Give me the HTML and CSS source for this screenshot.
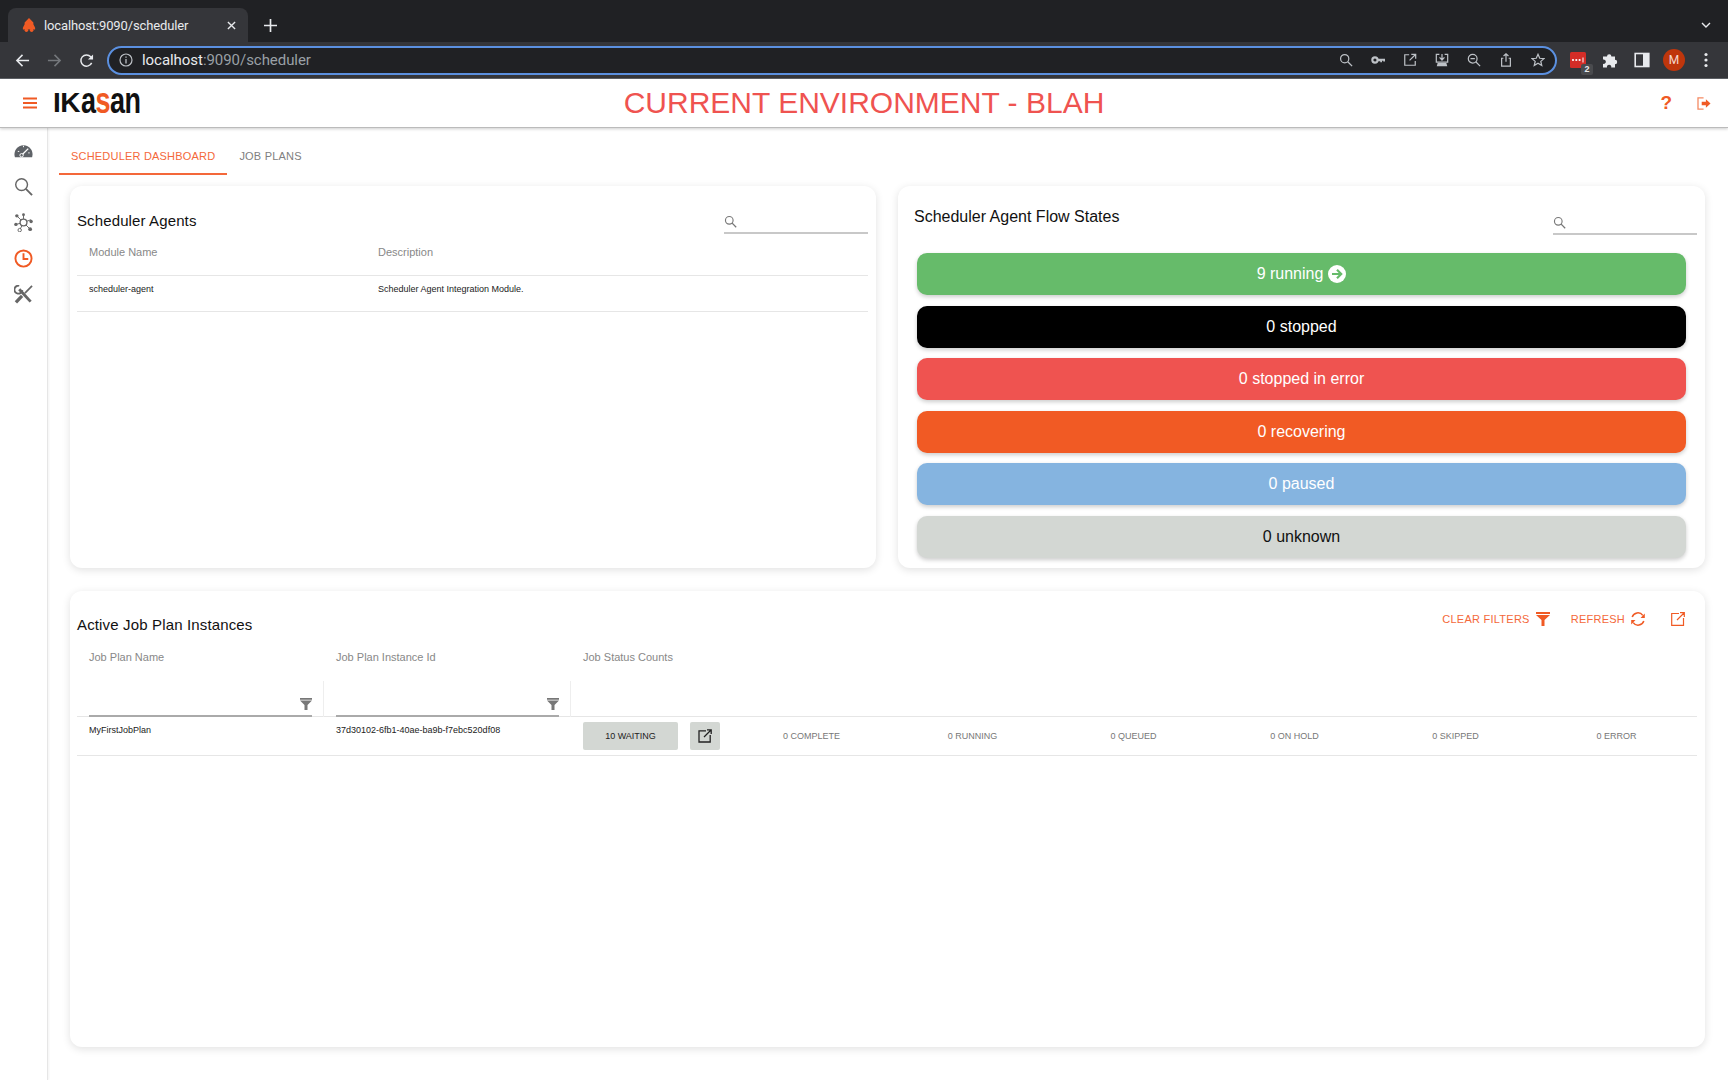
FILE: index.html
```html
<!DOCTYPE html>
<html>
<head>
    <title>localhost:9090/scheduler</title>
    <link rel="stylesheet" href="styles.css">
</head>
<body>
    <div class="tab-strip">
        <div class="browser-tab">
            <svg class="favicon" viewBox="0 0 16 16"><path d="M8 0 L13 5 V7 L15 11 V13 H1 V11 L3 7 V5 Z" fill="#f05a24"/><circle cx="5" cy="14" r="2" fill="#f05a24"/><circle cx="11" cy="14" r="2" fill="#f05a24"/></svg>
            <span class="browser-tab-title">localhost:9090/scheduler</span>
            <svg class="tab-close" viewBox="0 0 10 10"><path d="M1 1 L9 9 M9 1 L1 9" stroke="#e8eaed" stroke-width="1.5"/></svg>
        </div>
        <svg class="new-tab" viewBox="0 0 14 14"><path d="M7 0 V14 M0 7 H14" stroke="#e8eaed" stroke-width="1.8"/></svg>
        <svg class="tab-list" viewBox="0 0 10 6"><path d="M1 1 L5 5 L9 1" fill="none" stroke="#e8eaed" stroke-width="1.4"/></svg>
    </div>

    <div class="toolbar">
        <svg class="nav-icon" viewBox="0 0 16 16"><path d="M15 8 H2 M8 2 L2 8 L8 14" fill="none" stroke="#e8eaed" stroke-width="1.6"/></svg>
        <svg class="nav-icon" viewBox="0 0 16 16"><path d="M1 8 H14 M8 2 L14 8 L8 14" fill="none" stroke="#75787c" stroke-width="1.6"/></svg>
        <svg class="nav-icon" viewBox="0 0 16 16"><path d="M13.5 10.5 A6 6 0 1 1 12.5 4 L14.5 6" fill="none" stroke="#e8eaed" stroke-width="1.6"/><path d="M15 1.5 V7 H9.5 Z" fill="#e8eaed"/></svg>
        <div class="omnibox">
            <svg class="omni-info" viewBox="0 0 14 14"><circle cx="7" cy="7" r="6" fill="none" stroke="#bdc1c6" stroke-width="1.2"/><path d="M7 6 V10.5 M7 3.4 V4.8" stroke="#bdc1c6" stroke-width="1.3"/></svg>
            <span class="omni-url">localhost<span class="omni-url-rest">:9090/scheduler</span></span>
            <div class="omni-actions">
                <svg class="omni-icon" viewBox="0 0 16 16"><circle cx="6.5" cy="6.5" r="4.7" fill="none" stroke="#bdc1c6" stroke-width="1.4"/><path d="M10 10 L15 15" stroke="#bdc1c6" stroke-width="1.5"/></svg>
                <svg class="omni-icon" viewBox="0 0 16 16"><circle cx="4.5" cy="8" r="3" fill="none" stroke="#bdc1c6" stroke-width="2.4"/><path d="M7.5 6.6 H16 V9.8 H14 V8.9 H12.6 V10.6 H10.6 V9.4 H7.5 Z" fill="#bdc1c6"/></svg>
                <svg class="omni-icon" viewBox="0 0 16 16"><path d="M7 2 H2 V14 H14 V9 M9.5 1.5 H14.5 V6.5 M14 2 L7.5 8.5" fill="none" stroke="#bdc1c6" stroke-width="1.4"/></svg>
                <svg class="omni-icon" viewBox="0 0 16 16"><path d="M5 1.5 H1.5 V10.5 H14.5 V1.5 H11 M8 1 V7.5 M5.2 5 L8 8 L10.8 5" fill="none" stroke="#bdc1c6" stroke-width="1.4"/><path d="M3 11.5 H13 L14 15 H2 Z" fill="#bdc1c6"/></svg>
                <svg class="omni-icon" viewBox="0 0 16 16"><circle cx="6.5" cy="6.5" r="5" fill="none" stroke="#bdc1c6" stroke-width="1.4"/><path d="M10 10 L15 15 M4 6.5 H9" stroke="#bdc1c6" stroke-width="1.4"/></svg>
                <svg class="omni-icon" viewBox="0 0 16 16"><path d="M5 6 H3 V15 H13 V6 H11 M8 10 V1 M5.2 3.5 L8 1 L10.8 3.5" fill="none" stroke="#bdc1c6" stroke-width="1.4"/></svg>
                <svg class="omni-icon" viewBox="0 0 16 16"><path d="M8 1.5 L10 6 L14.8 6.4 L11.2 9.6 L12.3 14.3 L8 11.8 L3.7 14.3 L4.8 9.6 L1.2 6.4 L6 6 Z" fill="none" stroke="#bdc1c6" stroke-width="1.4"/></svg>
            </div>
        </div>
        <div class="toolbar-exts">
            <div class="ext-lastpass">
                <svg viewBox="0 0 16 16"><rect width="16" height="16" rx="1.5" fill="#d32d27"/><circle cx="3" cy="8" r="1.1" fill="#fff"/><circle cx="6.3" cy="8" r="1.1" fill="#fff"/><circle cx="9.6" cy="8" r="1.1" fill="#fff"/><path d="M13 5.5 V10.5" stroke="#fff" stroke-width="1"/></svg>
                <span class="ext-badge">2</span>
            </div>
            <svg class="ext-icon" viewBox="0 0 16 16"><path d="M1 4.5 H5 A2.2 2.2 0 1 1 9.4 4.5 H13 V7.8 A2.2 2.2 0 1 1 13 12.2 V15.5 H9.2 A2.2 2.2 0 1 0 5 15.5 H1 V11.8 A2.2 2.2 0 1 0 1 7.6 Z" fill="#e8eaed"/></svg>
            <svg class="ext-icon" viewBox="0 0 16 16"><rect x="1.2" y="1.5" width="13.6" height="13" fill="none" stroke="#e8eaed" stroke-width="1.6"/><rect x="9" y="1.5" width="6" height="13" fill="#e8eaed"/></svg>
            <div class="avatar">M</div>
            <svg class="ext-icon" viewBox="0 0 16 16"><circle cx="8" cy="2.5" r="1.6" fill="#e8eaed"/><circle cx="8" cy="8" r="1.6" fill="#e8eaed"/><circle cx="8" cy="13.5" r="1.6" fill="#e8eaed"/></svg>
        </div>
    </div>

    <header class="app-header">
        <svg class="hamburger" viewBox="0 0 14 12"><path d="M0 1.5 H14 M0 6 H14 M0 10.5 H14" stroke="#f05a24" stroke-width="2"/></svg>
        <div class="logo">IK<span class="logo-low">a<span class="logo-s">s</span>an</span></div>
        <div class="env-title">CURRENT ENVIRONMENT - BLAH</div>
        <div class="header-actions">
            <span class="help">?</span>
            <svg class="logout" viewBox="0 0 16 14"><path d="M7 1 H1 V13 H7" fill="none" stroke="#f58a63" stroke-width="1.4"/><path d="M5 5.2 H9.5 V2.5 L14.5 7 L9.5 11.5 V8.8 H5 Z" fill="#f05a24"/></svg>
        </div>
    </header>

    <div class="app-body">
        <nav class="sidebar">
            <svg class="side-icon" viewBox="0 0 20 20"><path d="M1 17 A9.5 9.5 0 1 1 19 17 Z" fill="#5f6368"/><path d="M8 15 L15 8" stroke="#fff" stroke-width="1.4"/><circle cx="8" cy="15" r="1.8" fill="#5f6368" stroke="#fff" stroke-width="1"/><path d="M4 11 H5.5 M10 5 V6.5 M15 12.5 H16.5" stroke="#fff"/></svg>
            <svg class="side-icon" viewBox="0 0 20 20"><circle cx="8" cy="8" r="6.2" fill="none" stroke="#666" stroke-width="1.5"/><path d="M12.5 12.5 L19 19" stroke="#666" stroke-width="2"/></svg>
            <svg class="side-icon" viewBox="0 0 20 20"><g stroke="#666" stroke-width="1"><path d="M10 10 L3 3 M10 10 L10 1 M10 10 L18 7 M10 10 L17 17 M10 10 L6 18 M10 10 L2 12"/></g><circle cx="10" cy="10" r="3.6" fill="#fff" stroke="#666" stroke-width="1.4"/><circle cx="3" cy="3" r="1.8" fill="#666"/><circle cx="10" cy="1.8" r="1.5" fill="#666"/><circle cx="18" cy="9" r="1.8" fill="#666"/><circle cx="17" cy="17" r="2" fill="#666"/><circle cx="6" cy="18" r="1.8" fill="#fff" stroke="#666"/><circle cx="2" cy="12" r="1.8" fill="#666"/></svg>
            <svg class="side-icon" viewBox="0 0 20 20"><circle cx="10" cy="10" r="8.5" fill="none" stroke="#f05a24" stroke-width="2"/><path d="M10 4.5 V10.5 H15" fill="none" stroke="#f05a24" stroke-width="2"/></svg>
            <svg class="side-icon" viewBox="0 0 20 20"><path d="M5.5 4.5 L17.5 17.5" stroke="#666" stroke-width="3"/><path d="M5.5 0.8 A4.2 4.2 0 1 0 8.8 5.5" fill="none" stroke="#666" stroke-width="2"/><path d="M19 1 L11.5 8.5" stroke="#666" stroke-width="1.8"/><path d="M8.5 11.5 L2 18.2" stroke="#666" stroke-width="3.4"/></svg>
        </nav>

        <main class="main">
            <div class="tabs">
                <div class="tab active">SCHEDULER DASHBOARD</div>
                <div class="tab">JOB PLANS</div>
            </div>

            <div class="top-row">
                <section class="card agents-card">
                    <div class="agents-head">
                        <h2 class="card-title">Scheduler Agents</h2>
                        <div class="search-box">
                            <svg class="search-icon" viewBox="0 0 16 16"><circle cx="6.5" cy="6.5" r="4.7" fill="none" stroke="#777" stroke-width="1.4"/><path d="M10 10 L15 15" stroke="#777" stroke-width="1.6"/></svg>
                        </div>
                    </div>
                    <div class="agents-row agents-header">
                        <span>Module Name</span>
                        <span>Description</span>
                    </div>
                    <div class="agents-row agents-data">
                        <span>scheduler-agent</span>
                        <span>Scheduler Agent Integration Module.</span>
                    </div>
                </section>

                <section class="card states-card">
                    <div class="states-head">
                        <h2 class="card-title">Scheduler Agent Flow States</h2>
                        <div class="search-box">
                            <svg class="search-icon" viewBox="0 0 16 16"><circle cx="6.5" cy="6.5" r="4.7" fill="none" stroke="#777" stroke-width="1.4"/><path d="M10 10 L15 15" stroke="#777" stroke-width="1.6"/></svg>
                        </div>
                    </div>
                    <div class="state-list">
                        <div class="state state-running">9 running
                            <svg class="state-arrow" viewBox="0 0 18 18"><circle cx="9" cy="9" r="9" fill="#fff"/><path d="M4 9 H12 M9 4.8 L13.2 9 L9 13.2" fill="none" stroke="#66bb6a" stroke-width="2.2"/></svg>
                        </div>
                        <div class="state state-stopped">0 stopped</div>
                        <div class="state state-error">0 stopped in error</div>
                        <div class="state state-recovering">0 recovering</div>
                        <div class="state state-paused">0 paused</div>
                        <div class="state state-unknown">0 unknown</div>
                    </div>
                </section>
            </div>

            <section class="card jobs-card">
                <div class="jobs-head">
                    <h2 class="card-title">Active Job Plan Instances</h2>
                    <div class="jobs-actions">
                        <span class="action">CLEAR FILTERS
                            <svg class="action-icon" viewBox="0 0 14 14"><path d="M0 0 H14 V2 H0 Z M0 3 H14 L8.5 8 V14 H5.5 V8 Z" fill="#f05a24"/></svg>
                        </span>
                        <span class="action">REFRESH
                            <svg class="action-icon" viewBox="0 0 14 14"><path d="M1.2 5 A6 6 0 0 1 11.8 3.4 M12.8 9 A6 6 0 0 1 2.2 10.6" fill="none" stroke="#f05a24" stroke-width="1.5"/><path d="M13.8 1.5 V6 H9.5 Z M0.2 12.5 V8 H4.5 Z" fill="#f05a24"/></svg>
                        </span>
                        <svg class="external" viewBox="0 0 14 14"><path d="M8 1.5 H0.7 V13.3 H12.5 V6 M9 0.7 H13.3 V5 M13 1 L6 8" fill="none" stroke="#f05a24" stroke-width="1.2"/></svg>
                    </div>
                </div>

                <div class="jobs-grid jobs-labels">
                    <span>Job Plan Name</span>
                    <span>Job Plan Instance Id</span>
                    <span>Job Status Counts</span>
                </div>
                <div class="jobs-grid jobs-filters">
                    <div class="filter-cell">
                        <div class="filter-input">
                            <svg class="filter-icon" viewBox="0 0 12 12"><path d="M0 0 H12 V1.8 H0 Z M0 2.6 H12 L7.5 7 V12 H4.5 V7 Z" fill="#777"/></svg>
                        </div>
                    </div>
                    <div class="filter-cell">
                        <div class="filter-input">
                            <svg class="filter-icon" viewBox="0 0 12 12"><path d="M0 0 H12 V1.8 H0 Z M0 2.6 H12 L7.5 7 V12 H4.5 V7 Z" fill="#777"/></svg>
                        </div>
                    </div>
                    <div></div>
                </div>
                <div class="jobs-grid jobs-row">
                    <span class="job-cell">MyFirstJobPlan</span>
                    <span class="job-cell">37d30102-6fb1-40ae-ba9b-f7ebc520df08</span>
                    <div class="status-cell">
                        <div class="waiting">10 WAITING</div>
                        <div class="open-btn">
                            <svg viewBox="0 0 14 14"><path d="M8 1.8 H1 V13 H12.2 V6 M9 0.8 H13.2 V5 M13 1 L6 8" fill="none" stroke="#222" stroke-width="1.3"/></svg>
                        </div>
                        <div class="counts">
                            <span>0 COMPLETE</span>
                            <span>0 RUNNING</span>
                            <span>0 QUEUED</span>
                            <span>0 ON HOLD</span>
                            <span>0 SKIPPED</span>
                            <span>0 ERROR</span>
                        </div>
                    </div>
                </div>
            </section>
        </main>
    </div>
</body>
</html>
```

FILE: styles.css
```css
* {
    box-sizing: border-box;
}
html, body {
    margin: 0;
    height: 1080px;
    overflow: hidden;
}
body {
    font-family: "Liberation Sans", Arial, sans-serif;
    background-color: #fff;
    display: flex;
    flex-direction: column;
}

/* browser chrome */
.tab-strip {
    height: 42px;
    background-color: #202124;
    display: flex;
    align-items: flex-end;
    padding-left: 8px;
    padding-right: 17px;
}
.browser-tab {
    width: 240px;
    height: 34px;
    background-color: #35363a;
    border-radius: 8px 8px 0 0;
    display: flex;
    align-items: center;
    padding-left: 14px;
    padding-right: 12px;
}
.favicon {
    width: 14px;
    height: 16px;
    margin-right: 8px;
}
.browser-tab-title {
    flex: 1;
    font-family: Roboto, sans-serif;
    font-size: 13px;
    letter-spacing: -0.13px;
    color: #e8eaed;
}
.tab-close {
    width: 9px;
    height: 9px;
}
.new-tab {
    width: 13px;
    height: 13px;
    margin-left: 16px;
    margin-bottom: 10px;
}
.tab-list {
    width: 10px;
    height: 6px;
    margin-left: auto;
    margin-bottom: 14px;
}
.toolbar {
    height: 37px;
    background-color: #35363a;
    border-bottom: 1px solid #5f6368;
    display: flex;
    align-items: center;
    padding-left: 15px;
}
.nav-icon {
    width: 15px;
    height: 15px;
    margin-right: 17px;
}
.nav-icon:nth-of-type(3) {
    margin-right: 13px;
}
.omnibox {
    width: 1450px;
    height: 29px;
    background-color: #202124;
    border: 2px solid #5b90e0;
    border-radius: 15px;
    display: flex;
    align-items: center;
    padding-left: 10px;
    padding-right: 10px;
}
.omni-info {
    width: 14px;
    height: 14px;
    margin-right: 9px;
}
.omni-url {
    font-family: Roboto, sans-serif;
    font-size: 15px;
    letter-spacing: -0.05px;
    color: #e8eaed;
}
.omni-url-rest {
    color: #9aa0a6;
}
.omni-actions {
    margin-left: auto;
    display: flex;
    align-items: center;
    gap: 18px;
}
.omni-icon {
    width: 14px;
    height: 14px;
}
.toolbar-exts {
    display: flex;
    align-items: center;
    margin-left: 13px;
    gap: 16px;
}
.ext-lastpass {
    position: relative;
    width: 16px;
    height: 16px;
}
.ext-lastpass svg {
    display: block;
}
.ext-badge {
    position: absolute;
    right: -7px;
    bottom: -7px;
    width: 12px;
    height: 11px;
    background-color: #4a4b4e;
    border-radius: 2px;
    font-size: 9px;
    line-height: 11px;
    text-align: center;
    font-weight: bold;
    color: #e8eaed;
}
.ext-icon {
    width: 16px;
    height: 16px;
}
.avatar {
    width: 22px;
    height: 22px;
    border-radius: 50%;
    background-color: #bf360c;
    color: #f5d9cf;
    font-family: Roboto, sans-serif;
    font-size: 12px;
    line-height: 22px;
    text-align: center;
    margin-left: -3px;
    margin-right: -3px;
}

/* app header */
.app-header {
    position: relative;
    height: 49px;
    display: flex;
    align-items: center;
    padding-left: 23px;
    padding-right: 16px;
    border-bottom: 1px solid #bbb;
    box-shadow: 0 1px 3px rgba(0,0,0,0.2);
}
.hamburger {
    width: 14px;
    height: 12px;
    margin-right: 16px;
}
.logo {
    font-size: 28px;
    font-weight: bold;
    letter-spacing: -0.5px;
    color: #111;
    line-height: 28px;
}
.logo-low {
    display: inline-block;
    font-size: 27px;
    margin-left: 1px;
    transform: scaleY(1.4);
    transform-origin: 0 21px;
}
.logo-s {
    color: #f05a24;
}
.env-title {
    position: absolute;
    left: 0;
    right: 0;
    text-align: center;
    font-size: 30px;
    color: #ef5350;
}
.header-actions {
    margin-left: auto;
    display: flex;
    align-items: center;
    gap: 25px;
}
.help {
    font-size: 19px;
    font-weight: bold;
    color: #f05a24;
}
.logout {
    width: 15px;
    height: 13px;
}

/* layout */
.app-body {
    flex: 1;
    display: flex;
    min-height: 0;
}
.sidebar {
    width: 48px;
    border-right: 1px solid #e6e6e6;
    box-shadow: 1px 0 2px rgba(0,0,0,0.05);
    display: flex;
    flex-direction: column;
    align-items: center;
    padding-top: 13px;
    padding-right: 1px;
    gap: 17px;
}
.side-icon {
    width: 19px;
    height: 19px;
}
.main {
    flex: 1;
    padding-left: 22px;
    padding-right: 23px;
    padding-bottom: 33px;
    display: flex;
    flex-direction: column;
    min-width: 0;
}
.tabs {
    display: flex;
    height: 58px;
    margin-left: -11px;
}
.tab {
    height: 47px;
    padding: 13px 12px 0;
    line-height: 30px;
    font-size: 11px;
    letter-spacing: 0.2px;
    color: #808080;
}
.tab.active {
    color: #f4683a;
    border-bottom: 2px solid #f4683a;
}
.top-row {
    display: grid;
    grid-template-columns: 806px 807px;
    gap: 22px;
    height: 382px;
    margin-bottom: 23px;
}
.card {
    background-color: #fff;
    border-radius: 12px;
    box-shadow: 0 2px 8px rgba(0,0,0,0.12);
}
.card-title {
    margin: 0;
    font-size: 15px;
    letter-spacing: 0.12px;
    font-weight: normal;
    color: #111;
}
.search-box {
    width: 144px;
    height: 24px;
    border-bottom: 2px solid #c8c8c8;
    display: flex;
    align-items: center;
}
.search-icon {
    width: 13px;
    height: 13px;
}

/* scheduler agents */
.agents-card {
    padding: 0 8px 0 7px;
}
.agents-head {
    height: 48px;
    display: flex;
    align-items: flex-end;
    justify-content: space-between;
}
.agents-head .card-title {
    margin-bottom: 5px;
}
.agents-row {
    display: grid;
    grid-template-columns: 289px 1fr;
    padding-left: 12px;
    border-bottom: 1px solid #e6e6e6;
}
.agents-header {
    height: 42px;
    padding-top: 12px;
    font-size: 11px;
    color: #888;
}
.agents-data {
    height: 36px;
    padding-top: 8px;
    font-size: 9px;
    color: #222;
}

/* flow states */
.states-card {
    padding: 0 8px 0 16px;
}
.states-head {
    height: 67px;
    display: flex;
    justify-content: space-between;
    align-items: flex-start;
}
.states-head .card-title {
    margin-top: 22px;
    font-size: 16px;
    letter-spacing: 0;
}
.states-head .search-box {
    margin-top: 25px;
}
.state-list {
    display: flex;
    flex-direction: column;
    gap: 10.5px;
    margin-left: 3px;
    margin-right: 11px;
}
.state {
    height: 42px;
    border-radius: 10px;
    display: flex;
    align-items: center;
    justify-content: center;
    gap: 5px;
    font-size: 16px;
    color: #fff;
    box-shadow: 0 2px 4px rgba(0,0,0,0.2);
}
.state-arrow {
    width: 18px;
    height: 18px;
}
.state-running {
    background-color: #66bb6a;
}
.state-stopped {
    background-color: #000;
}
.state-error {
    background-color: #ef5350;
}
.state-recovering {
    background-color: #f15a24;
}
.state-paused {
    background-color: #85b4e0;
}
.state-unknown {
    background-color: #d3d7d3;
    color: #111;
}

/* job plan instances */
.jobs-card {
    flex: 1;
    padding: 0 8px 0 7px;
}
.jobs-head {
    height: 49px;
    display: flex;
    align-items: flex-end;
    justify-content: space-between;
}
.jobs-head .card-title {
    margin-bottom: 7px;
    letter-spacing: 0.15px;
}
.jobs-actions {
    display: flex;
    align-items: center;
    align-self: flex-start;
    margin-top: 21px;
    margin-right: 12px;
}
.action {
    display: flex;
    align-items: center;
    gap: 6px;
    font-size: 11px;
    letter-spacing: 0.25px;
    color: #f4683a;
    margin-right: 21px;
}
.action-icon {
    width: 14px;
    height: 14px;
}
.external {
    width: 14px;
    height: 14px;
    margin-left: 5px;
}
.jobs-grid {
    display: grid;
    grid-template-columns: 247px 247px 1fr;
}
.jobs-labels {
    height: 41px;
    padding-left: 12px;
    padding-top: 11px;
    font-size: 11px;
    color: #888;
}
.jobs-filters {
    height: 36px;
    border-bottom: 1px solid #e6e6e6;
}
.filter-cell {
    padding-left: 12px;
    padding-right: 11px;
    border-right: 1px solid #eee;
}
.filter-input {
    height: 36px;
    border-bottom: 2px solid #aaa;
    display: flex;
    justify-content: flex-end;
    align-items: flex-end;
    padding-bottom: 5px;
}
.filter-icon {
    width: 12px;
    height: 12px;
}
.jobs-row {
    height: 39px;
    border-bottom: 1px solid #e6e6e6;
    padding-left: 12px;
}
.job-cell {
    padding-top: 8px;
    font-size: 9px;
    color: #222;
}
.status-cell {
    display: flex;
    align-items: flex-start;
    padding-top: 5px;
}
.waiting {
    width: 95px;
    height: 28px;
    background-color: #d3d7d3;
    border-radius: 2px;
    font-size: 9px;
    line-height: 28px;
    text-align: center;
    color: #222;
}
.open-btn {
    width: 30px;
    height: 28px;
    margin-left: 12px;
    background-color: #d3d7d3;
    border-radius: 2px;
    display: flex;
    align-items: center;
    justify-content: center;
}
.open-btn svg {
    width: 14px;
    height: 14px;
}
.counts {
    flex: 1;
    margin-left: 11px;
    display: grid;
    grid-template-columns: repeat(6, 1fr);
    text-align: center;
    font-size: 9px;
    line-height: 28px;
    color: #777;
}
```
